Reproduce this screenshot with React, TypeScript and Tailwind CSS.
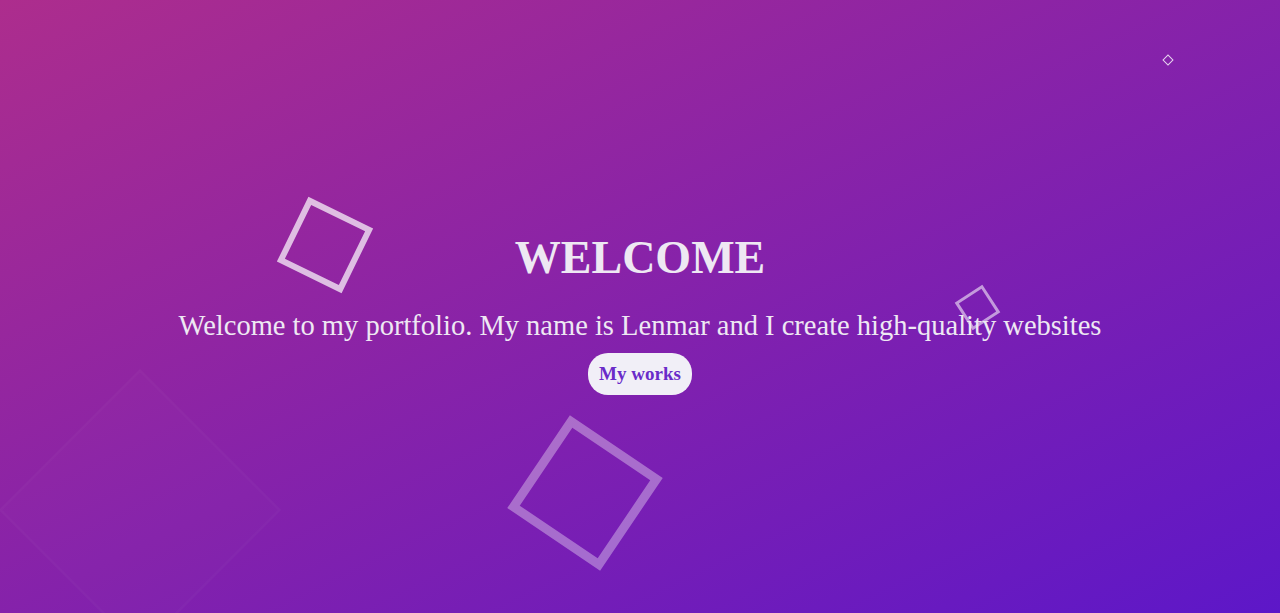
export default function App() {
  return (
    <div className="relative h-[613px] w-full overflow-hidden bg-[linear-gradient(to_bottom_right,#ad2d8d,#5d17c8)] font-['Liberation_Serif',serif]">
      {/* floating squares */}
      <div className="absolute left-[289px] top-[209px] h-[72px] w-[72px] rotate-[26deg] border-[6px] border-white/70" />
      <div className="absolute left-[529px] top-[437px] h-[112px] w-[112px] rotate-[34deg] border-[9px] border-white/35" />
      <div className="absolute left-[961px] top-[291px] h-[33px] w-[33px] rotate-[-33deg] border-[3px] border-white/55" />
      <div className="absolute left-[1164px] top-[56px] h-[8px] w-[8px] rotate-45 border border-white/80" />
      <div className="absolute left-[40px] top-[410px] h-[200px] w-[200px] rotate-45 border-[3px] border-white/[0.02] bg-white/[0.01]" />

      <div className="relative flex h-full flex-col items-center justify-center pt-[14px] text-[#eee8f3]">
        <h1 className="text-[46px] leading-[52px] font-bold">WELCOME</h1>
        <p className="mt-[24px] text-[28.5px] leading-[36px]">
          Welcome to my portfolio. My name is Lenmar and I create high-quality websites
        </p>
        <button className="mt-[9px] h-[42px] rounded-[20px] bg-[#f1eff7] px-[11px] text-[19px] font-bold text-[#6a2bc9]">
          My works
        </button>
      </div>
    </div>
  )
}
